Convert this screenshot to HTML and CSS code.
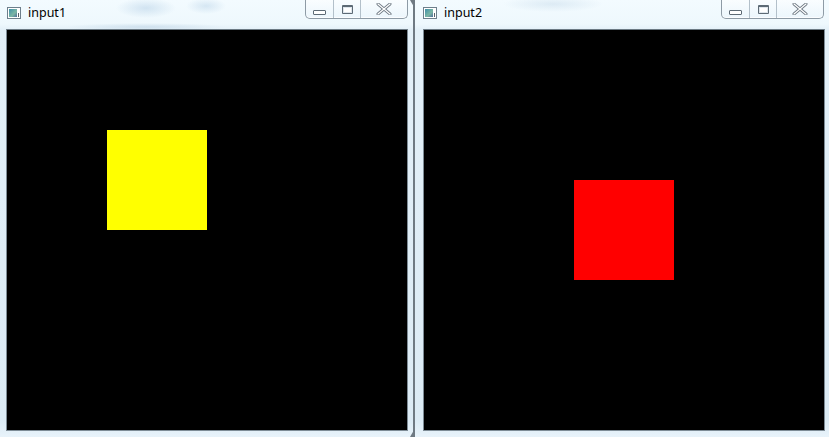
FILE: index.html
```html
<!DOCTYPE html>
<html>
<head>
<meta charset="utf-8">
<link rel="stylesheet" href="styles.css">
</head>
<body>
<div class="desk">
  <div class="win win-left">
    <div class="titlebar">
      <span class="appicon"><span class="appicon-in"></span><span class="appicon-mark"></span></span>
      <span class="title">input1</span>
      <div class="caps">
        <span class="cap cap-min"><span class="g-min"></span></span>
        <span class="cap cap-max"><span class="g-max"></span></span>
        <span class="cap cap-close"><svg width="16" height="12" viewBox="0 0 16 12"><path d="M2 1 L14 11 M14 1 L2 11" stroke="#6f7a84" stroke-width="3" stroke-linecap="round"/><path d="M2 1 L14 11 M14 1 L2 11" stroke="#ffffff" stroke-width="1.2" stroke-linecap="round"/></svg></span>
      </div>
    </div>
    <div class="clientrow">
      <div class="client">
        <div class="square sq-yellow"></div>
      </div>
    </div>
  </div>
  <div class="splitter"><span class="tri tri-top"></span><span class="tri tri-bot"></span></div>
  <div class="win win-right">
    <div class="titlebar">
      <span class="appicon"><span class="appicon-in"></span><span class="appicon-mark"></span></span>
      <span class="title">input2</span>
      <div class="caps">
        <span class="cap cap-min"><span class="g-min"></span></span>
        <span class="cap cap-max"><span class="g-max"></span></span>
        <span class="cap cap-close"><svg width="16" height="12" viewBox="0 0 16 12"><path d="M2 1 L14 11 M14 1 L2 11" stroke="#6f7a84" stroke-width="3" stroke-linecap="round"/><path d="M2 1 L14 11 M14 1 L2 11" stroke="#ffffff" stroke-width="1.2" stroke-linecap="round"/></svg></span>
      </div>
    </div>
    <div class="clientrow">
      <div class="client">
        <div class="square sq-red"></div>
      </div>
    </div>
  </div>
</div>
</body>
</html>
```
FILE: styles.css
```css
html, body {
  margin: 0;
  padding: 0;
  width: 829px;
  height: 437px;
  overflow: hidden;
  background: #e4f1f9;
  font-family: "Noto Sans", "Liberation Sans", sans-serif;
}
.desk {
  display: flex;
  width: 829px;
  height: 437px;
}
.win {
  position: relative;
  height: 437px;
  background: linear-gradient(180deg, #f3fbff 0px, #eef8fd 24px, #e3f0f8 30px, #dcebf5 420px, #e8f3fa 437px);
  box-sizing: border-box;
}
.win-left {
  width: 413px;
  padding-left: 6px;
}
.win-right {
  width: 414px;
  padding-left: 8px;
}
.titlebar {
  position: relative;
  height: 29px;
  display: flex;
  align-items: flex-start;
  background: radial-gradient(ellipse 30px 10px at 140px 8px, rgba(170,200,225,0.45), transparent),
              radial-gradient(ellipse 20px 8px at 200px 6px, rgba(170,200,225,0.4), transparent),
              radial-gradient(ellipse 80px 4px at 140px 27px, rgba(180,205,225,0.5), transparent);
}
.win-right .titlebar {
  background: radial-gradient(ellipse 50px 8px at 130px 4px, rgba(180,205,225,0.35), transparent);
}
.appicon {
  position: relative;
  width: 14px;
  height: 12px;
  margin: 7px 0 0 1px;
  border: 1px solid #6d7f8c;
  background: #ffffff;
  box-sizing: border-box;
  display: flex;
  padding: 1px;
}
.win-right .appicon { margin-left: 0; }
.appicon-in {
  width: 8px;
  height: 8px;
  background: linear-gradient(135deg, #3f8fa8, #7bb7a5 60%, #4f6f9a);
}
.appicon-mark {
  position: absolute;
  right: 1px;
  bottom: 1px;
  width: 1px;
  height: 4px;
  background: #55606a;
}
.title {
  margin: 5px 0 0 7px;
  font-size: 12.5px;
  line-height: 16px;
  color: #000;
}
.caps {
  position: absolute;
  top: 0;
  display: flex;
  height: 18px;
  border: 1px solid #8e9ba6;
  border-top: none;
  border-radius: 0 0 5px 5px;
  background: linear-gradient(180deg, rgba(255,255,255,0.55), rgba(235,245,252,0.75));
  box-shadow: inset 0 -1px 0 rgba(255,255,255,0.8);
  overflow: hidden;
}
.win-left .caps { left: 299px; }
.win-right .caps { left: 298px; }
.cap {
  display: flex;
  align-items: center;
  justify-content: center;
  height: 18px;
}
.cap-min { width: 27px; border-right: 1px solid #b3c0ca; }
.cap-max { width: 26px; border-right: 1px solid #b3c0ca; }
.cap-close { width: 46px; }
.g-min {
  width: 11px;
  height: 3px;
  margin-top: 6px;
  border: 1px solid #5d6a75;
  background: #fff;
  border-radius: 1px;
}
.g-max {
  width: 9px;
  height: 6px;
  border: 1px solid #5d6a75;
  border-top-width: 2px;
  background: #fff;
  border-radius: 1px;
  box-shadow: inset 0 0 0 1px #dfe6ec;
}
.clientrow {
  display: flex;
}
.client {
  position: relative;
  width: 400px;
  height: 400px;
  border: 1px solid #7e8c96;
  border-top-color: #6c7a84;
  background: #000;
}
.square {
  position: absolute;
  width: 100px;
  height: 100px;
}
.sq-yellow {
  left: 100px;
  top: 100px;
  background: #ffff00;
}
.sq-red {
  left: 150px;
  top: 150px;
  background: #ff0000;
}
.splitter {
  position: relative;
  width: 2px;
  height: 437px;
  background: #6f7a83;
}
.tri {
  position: absolute;
  left: -3px;
  width: 0;
  height: 0;
  border-left: 4px solid transparent;
  border-right: 4px solid transparent;
}
.tri-top {
  top: 0;
  border-top: 7px solid #6f7a83;
}
.tri-bot {
  bottom: 0;
  border-bottom: 7px solid #6f7a83;
}
```
